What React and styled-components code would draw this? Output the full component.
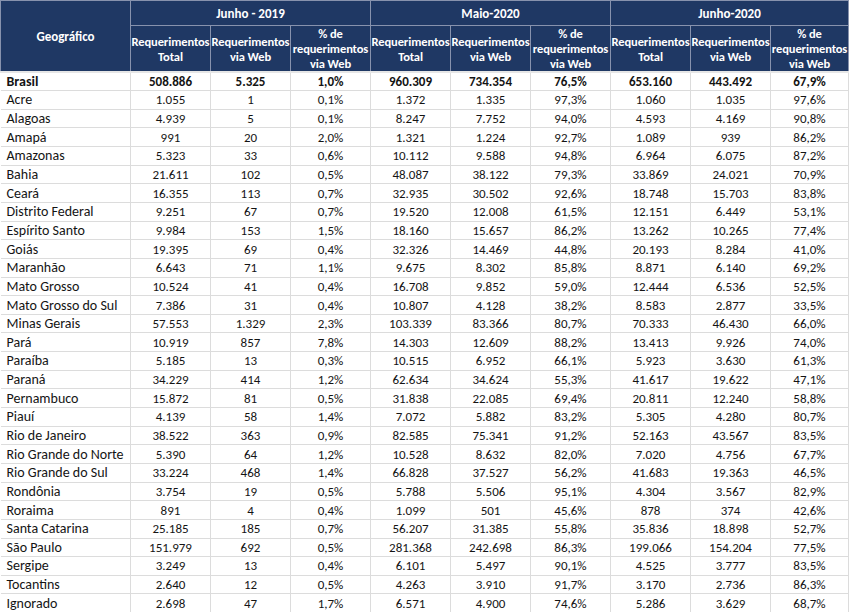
import React from 'react';
import styled, { createGlobalStyle } from 'styled-components';

const GlobalStyle = createGlobalStyle`
    html, body {
        margin: 0;
        padding: 0;
        background-color: #ffffff;
    }
    body {
        font-family: Carlito, Lato, "Liberation Sans", sans-serif;
    }
`;

const Table = styled.table`
    width: 848px;
    table-layout: fixed;
    border-collapse: collapse;
    color: #141414;
`;

const HeadCell = styled.th`
    background-color: #1f3864;
    color: #ffffff;
    font-size: 12.5px;
    font-weight: 700;
    letter-spacing: -0.1px;
    line-height: 15px;
    text-align: center;
    vertical-align: middle;
    padding: 0;
    border: 1px solid #8792ad;
    white-space: nowrap;
    height: ${props => props.$height || 'auto'};
`;

const GeoHead = styled(HeadCell)`
    font-size: 13px;
    letter-spacing: 0;
    border-bottom: 2px solid #e6e6e6;
`;

const GroupHead = styled(HeadCell)`
    font-size: 13px;
    letter-spacing: 0;
`;

const SubHead = styled(HeadCell)`
    border-bottom: 2px solid #e6e6e6;
`;

const Row = styled.tr`
    height: 18.65px;
`;

const Cell = styled.td`
    font-size: 13px;
    font-weight: ${props => (props.$bold ? 700 : 400)};
    text-align: center;
    padding: 0;
    line-height: 17px;
    border: 1px solid #dcdcdc;
    white-space: nowrap;
`;

const NameCell = styled(Cell)`
    text-align: left;
    padding-left: 6px;
    font-size: 14px;
    border-left: none;
`;

const LastCell = styled(Cell)`
    border-right: 1px solid #dcdcdc;
`;

const groups = ['Junho - 2019', 'Maio-2020', 'Junho-2020'];

const rows = [
    ['Brasil', '508.886', '5.325', '1,0%', '960.309', '734.354', '76,5%', '653.160', '443.492', '67,9%'],
    ['Acre', '1.055', '1', '0,1%', '1.372', '1.335', '97,3%', '1.060', '1.035', '97,6%'],
    ['Alagoas', '4.939', '5', '0,1%', '8.247', '7.752', '94,0%', '4.593', '4.169', '90,8%'],
    ['Amapá', '991', '20', '2,0%', '1.321', '1.224', '92,7%', '1.089', '939', '86,2%'],
    ['Amazonas', '5.323', '33', '0,6%', '10.112', '9.588', '94,8%', '6.964', '6.075', '87,2%'],
    ['Bahia', '21.611', '102', '0,5%', '48.087', '38.122', '79,3%', '33.869', '24.021', '70,9%'],
    ['Ceará', '16.355', '113', '0,7%', '32.935', '30.502', '92,6%', '18.748', '15.703', '83,8%'],
    ['Distrito Federal', '9.251', '67', '0,7%', '19.520', '12.008', '61,5%', '12.151', '6.449', '53,1%'],
    ['Espírito Santo', '9.984', '153', '1,5%', '18.160', '15.657', '86,2%', '13.262', '10.265', '77,4%'],
    ['Goiás', '19.395', '69', '0,4%', '32.326', '14.469', '44,8%', '20.193', '8.284', '41,0%'],
    ['Maranhão', '6.643', '71', '1,1%', '9.675', '8.302', '85,8%', '8.871', '6.140', '69,2%'],
    ['Mato Grosso', '10.524', '41', '0,4%', '16.708', '9.852', '59,0%', '12.444', '6.536', '52,5%'],
    ['Mato Grosso do Sul', '7.386', '31', '0,4%', '10.807', '4.128', '38,2%', '8.583', '2.877', '33,5%'],
    ['Minas Gerais', '57.553', '1.329', '2,3%', '103.339', '83.366', '80,7%', '70.333', '46.430', '66,0%'],
    ['Pará', '10.919', '857', '7,8%', '14.303', '12.609', '88,2%', '13.413', '9.926', '74,0%'],
    ['Paraíba', '5.185', '13', '0,3%', '10.515', '6.952', '66,1%', '5.923', '3.630', '61,3%'],
    ['Paraná', '34.229', '414', '1,2%', '62.634', '34.624', '55,3%', '41.617', '19.622', '47,1%'],
    ['Pernambuco', '15.872', '81', '0,5%', '31.838', '22.085', '69,4%', '20.811', '12.240', '58,8%'],
    ['Piauí', '4.139', '58', '1,4%', '7.072', '5.882', '83,2%', '5.305', '4.280', '80,7%'],
    ['Rio de Janeiro', '38.522', '363', '0,9%', '82.585', '75.341', '91,2%', '52.163', '43.567', '83,5%'],
    ['Rio Grande do Norte', '5.390', '64', '1,2%', '10.528', '8.632', '82,0%', '7.020', '4.756', '67,7%'],
    ['Rio Grande do Sul', '33.224', '468', '1,4%', '66.828', '37.527', '56,2%', '41.683', '19.363', '46,5%'],
    ['Rondônia', '3.754', '19', '0,5%', '5.788', '5.506', '95,1%', '4.304', '3.567', '82,9%'],
    ['Roraima', '891', '4', '0,4%', '1.099', '501', '45,6%', '878', '374', '42,6%'],
    ['Santa Catarina', '25.185', '185', '0,7%', '56.207', '31.385', '55,8%', '35.836', '18.898', '52,7%'],
    ['São Paulo', '151.979', '692', '0,5%', '281.368', '242.698', '86,3%', '199.066', '154.204', '77,5%'],
    ['Sergipe', '3.249', '13', '0,4%', '6.101', '5.497', '90,1%', '4.525', '3.777', '83,5%'],
    ['Tocantins', '2.640', '12', '0,5%', '4.263', '3.910', '91,7%', '3.170', '2.736', '86,3%'],
    ['Ignorado', '2.698', '47', '1,7%', '6.571', '4.900', '74,6%', '5.286', '3.629', '68,7%'],
];

export default function App() {
    return (
        <>
            <GlobalStyle />
            <Table>
                <colgroup>
                    <col style={{ width: 130 }} />
                    {Array.from({ length: 9 }).map((_, i) => (
                        <col key={i} style={{ width: i === 8 ? 78 : 80 }} />
                    ))}
                </colgroup>
                <thead>
                    <tr>
                        <GeoHead rowSpan={2}>Geográfico</GeoHead>
                        {groups.map(g => (
                            <GroupHead key={g} colSpan={3} $height="24px">{g}</GroupHead>
                        ))}
                    </tr>
                    <tr>
                        {groups.map(g => (
                            <React.Fragment key={g}>
                                <SubHead $height="45px">Requerimentos<br />Total</SubHead>
                                <SubHead>Requerimentos<br />via Web</SubHead>
                                <SubHead>% de<br />requerimentos<br />via Web</SubHead>
                            </React.Fragment>
                        ))}
                    </tr>
                </thead>
                <tbody>
                    {rows.map((r, idx) => {
                        const bold = idx === 0;
                        return (
                            <Row key={r[0]}>
                                <NameCell $bold={bold}>{r[0]}</NameCell>
                                {r.slice(1, 9).map((v, i) => (
                                    <Cell key={i} $bold={bold}>{v}</Cell>
                                ))}
                                <LastCell $bold={bold}>{r[9]}</LastCell>
                            </Row>
                        );
                    })}
                </tbody>
            </Table>
        </>
    );
}
